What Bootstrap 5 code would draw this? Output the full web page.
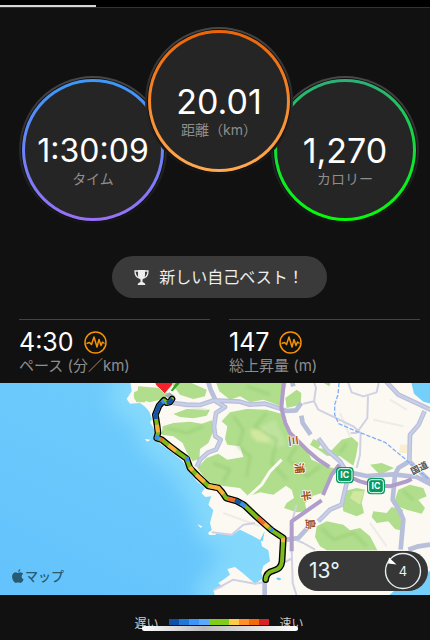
<!DOCTYPE html>
<html lang="ja">
<head>
<meta charset="utf-8">
<meta name="viewport" content="width=device-width, initial-scale=1">
<title>ランニングの記録</title>
<link href="https://cdn.jsdelivr.net/npm/bootstrap@5.3.0/dist/css/bootstrap.min.css" rel="stylesheet">
<style>
  body { background: #111; color: #fff; font-family: Inter, "Noto Sans CJK JP", sans-serif; }
  .top-strip { height: 8px; background: #000; border-bottom: 1px solid #333; }
  .top-strip .progress { height: 2px; width: 100%; background: transparent; border-radius: 0; }
  .top-strip .progress-bar { width: 22.3%; background: #d8d4da; }
  .dials { padding: 19px 11px 0 19px; }
  .dial { width: 148px; height: 148px; flex: none; padding: 1px; border-radius: 50%; border: 2px solid transparent;
    background: linear-gradient(#111, #111) padding-box, linear-gradient(#484848, #282828 50%, #141414) border-box; }
  .dial-side { margin-top: 49px; }
  .dial-main { margin: 0 -22px; z-index: 1; }
  .dial-face { height: 100%; border-radius: 50%; border: 3px solid transparent; padding-top: 51px; }
  .dial-time .dial-face { background: linear-gradient(#252525, #252525) padding-box, linear-gradient(#3c98f8, #9870f8) border-box; }
  .dial-main .dial-face { background: linear-gradient(#252525, #252525) padding-box, linear-gradient(#ec6408, #ffaa50) border-box; }
  .dial-cal .dial-face { background: linear-gradient(#252525, #252525) padding-box, linear-gradient(#2cb078, #0ce82c 60%, #08f808) border-box; }
  .dial-num { font-size: 34px; line-height: 36px; }
  .dial-time .dial-num { font-size: 32px; }
  .cap { font-size: 14px; line-height: 20px; color: #8e8e8e; }
  .stat .cap { font-size: 15px; }
  .best { height: 42px; width: 215px; border-radius: 21px; background: #3a3a3a; color: #eee; font-size: 16px; gap: 10px; }
  .best-row { padding: 32px 0 0 8px; }
  .stats { padding: 21px 10px 0 19px; gap: 19px; }
  .stat { border-top: 1px solid #444; padding-top: 8px; padding-bottom: 7px; }
  .stat-num { font-size: 25px; line-height: 28px; gap: 10px; }
  .map-brand { left: 12px; bottom: 9px; font-size: 13px; line-height: 20px; color: #285a74; gap: 1px; font-weight: 500; }
  .weather { right: 2px; bottom: 4px; width: 130px; height: 40px; border-radius: 20px; background: #363636; color: #e4f4f6; padding: 0 6px 0 11px; font-size: 21px; }
  .legend { padding: 18px 0 0 8px; font-size: 12px; line-height: 22px; gap: 10px; color: #ccc; height: 45px; }
  .scale { width: 101px; height: 6px; margin-top: 6px; }
  .scale span { flex: 1; }
  .home-bar { left: 50%; bottom: 9px; width: 156px; height: 5px; margin-left: -73px; border-radius: 3px; background: linear-gradient(90deg, #fff, #bbb 40%, #fff); }
</style>
</head>
<body>
<main>
  <div class="top-strip d-flex align-items-end">
    <div class="progress" role="progressbar" aria-label="ページ"><div class="progress-bar"></div></div>
  </div>

  <section class="dials d-flex justify-content-center text-center">
    <div class="dial dial-side dial-time"><div class="dial-face"><div class="dial-num">1:30:09</div><div class="cap">タイム</div></div></div>
    <div class="dial dial-main"><div class="dial-face"><div class="dial-num">20.01</div><div class="cap">距離（km）</div></div></div>
    <div class="dial dial-side dial-cal"><div class="dial-face"><div class="dial-num">1,270</div><div class="cap">カロリー</div></div></div>
  </section>

  <div class="best-row d-flex justify-content-center">
    <div class="best d-flex align-items-center justify-content-center">
      <svg width="15" height="17" viewBox="0 0 15 17" fill="none" stroke="#eee" aria-hidden="true">
        <path d="M4 1H11V6Q11 9.500 8.500 10.500V13Q11 13.500 11.500 16H3.500Q4 13.500 6.500 13V10.500Q4 9.500 4 6Z" fill="#eee" stroke="none"/>
        <path d="M4 2H1Q1 7.500 5 9M11 2H14Q14 7.500 10 9" stroke-width="1.300"/>
      </svg>
      <span>新しい自己ベスト！</span>
    </div>
  </div>

  <section class="stats d-flex">
    <div class="stat flex-fill w-50">
      <div class="stat-num d-flex align-items-center">4:30
        <svg width="23" height="23" viewBox="0 0 23 23" fill="none" stroke="#f59105" stroke-width="1.500" stroke-linejoin="round" aria-hidden="true"><circle cx="11.500" cy="11.500" r="10.500"/><path d="M2.500 12.500L5.500 11.500L7.500 13.500L10 6L13 16L15 8.500L17 14.500L18.500 11L20.500 12.500"/></svg>
      </div>
      <div class="cap">ペース (分／km)</div>
    </div>
    <div class="stat flex-fill w-50">
      <div class="stat-num d-flex align-items-center">147
        <svg width="23" height="23" viewBox="0 0 23 23" fill="none" stroke="#f59105" stroke-width="1.500" stroke-linejoin="round" aria-hidden="true"><circle cx="11.500" cy="11.500" r="10.500"/><path d="M2.500 12.500L5.500 11.500L7.500 13.500L10 6L13 16L15 8.500L17 14.500L18.500 11L20.500 12.500"/></svg>
      </div>
      <div class="cap">総上昇量 (m)</div>
    </div>
  </section>

  <section class="position-relative">
    <svg class="d-block w-100 h-auto" viewBox="0 0 1290 636" role="img" aria-label="ルートの地図">
      <defs>
        <linearGradient id="sea" x1="1" y1="0" x2="0" y2="1"><stop offset="0" stop-color="#74d0fa"/><stop offset=".6" stop-color="#6ac8fc"/><stop offset="1" stop-color="#64c2fc"/></linearGradient>
        <filter id="soft" x="-20%" y="-20%" width="140%" height="140%"><feGaussianBlur stdDeviation="28"/></filter>
        <filter id="haze" x="-20%" y="-20%" width="140%" height="140%"><feGaussianBlur stdDeviation="5"/></filter>
        <path id="land" d="M-30 0L-25 35L-40 58L-30 72L0 70L16 82L28 96L36 118L30 128L44 150L45 175L60 192L95 218L128 245L155 285L170 305L195 325L184 340L196 352L214 350L205 375L220 392L210 430L218 460L275 465L300 450L340 470L362 482L366 500L385 512L390 545L370 558L364 580L370 595L345 612L308 580L285 562L262 568L270 585L250 600L235 610L248 622L220 632L228 660H880V0Z"/>
      </defs>
      <rect width="1290" height="636" fill="url(#sea)"/>
      <g transform="translate(420 -10)">
        <use href="#land" fill="none" stroke="#8cdefc" stroke-width="95" opacity=".75" filter="url(#soft)"/>
        <ellipse cx="120" cy="540" rx="110" ry="65" fill="#68c6fa" opacity=".5" filter="url(#soft)"/>
        <use href="#land" fill="#fbf9f2"/>
        <g fill="#fbf9f2"><path d="M204 460L216 450L232 458L226 466H208ZM172 434L187 440L182 445ZM14 178L32 180L22 186Z"/></g>
        <g fill="#74d0fa"><path d="M812 0L822 42L850 66L880 74V0ZM738 655L762 634L800 630L840 585L880 570V655ZM408 596Q418 590 424 598Q416 606 408 596ZM360 482L374 455L368 485Z"/></g>

        <g fill="#b0de8c">
          <path d="M-18 38L0 30L16 38V68H-5Q-22 62-18 38Z"/>
          <path d="M-5 20L60 25L90 45L60 60L30 68L8 62L-12 68Z"/>
          <path d="M90 5L150 8L200 30L195 50L160 58L120 45ZM228 8H440L424 80L370 60L330 68L300 50L270 60L238 35Z"/>
          <path d="M100 103L140 88L210 90L200 108L160 116L120 112ZM68 140L100 130L150 126L185 132L216 122L222 150L205 190L180 208L178 238L158 245L140 218L128 190L100 170L65 165Z"/>
          <path d="M270 98L320 88L380 90L424 102L442 145L470 178L500 210L515 240L560 260L590 268L570 300L545 340L520 348L495 370L500 395L470 398L432 385L440 370L462 355L455 330L438 318L400 345L360 338L325 350L300 325L245 318L210 308L190 290L172 265L200 235L235 222L262 240L310 232L300 200L262 195L255 178L262 140L245 125Z"/>
          <path d="M470 30L484 40L482 75L440 85L436 55Z"/>
          <path d="M510 195L520 178L545 190L535 205L575 212L605 180L635 172L655 190L648 230L640 258L600 230L560 228L535 210Z"/>
          <path d="M690 255L725 250L762 265L720 285ZM610 335L650 325L675 330L665 370L672 400L650 410L610 395L605 360Z"/>
          <path d="M775 330L810 315L850 325L860 350L835 360L855 385L845 402L800 390L760 375ZM700 395L740 400L755 382L790 390L780 410L792 455L765 448L745 425L710 430L695 412Z"/>
          <path d="M530 440L560 425L610 435L630 452L660 445L690 470L712 512H560L540 500L525 472Z"/>
          <path d="M548 8H572L568 20Z"/>
        </g>
        <path d="M640 335L672 335L660 375L630 355Z" fill="#d2e8a0"/>
        <g filter="url(#haze)"><path d="M330 150L375 145L395 165L385 190L350 185L335 170Z" fill="#d2e8a0"/>
        <path d="M405 120L440 195L400 205L360 140Z" fill="#c6e6a8" opacity=".6"/></g>
        <path d="M780 195H803V220H778Z" fill="#fbedcf"/>
        <g fill="none" stroke="#8cc46c" stroke-width="6" opacity=".6" filter="url(#haze)">
          <path d="M280 110L310 150L295 200L330 230L320 290M380 100L345 140L410 180L395 250L440 300M80 145L140 160L190 140M220 250L270 270L250 305M470 200L445 240L500 290L540 260M620 190L600 220M545 445L580 480L640 460L680 500M790 335L820 360M320 20L390 45"/>
        </g>
        <g fill="none" stroke="#e9e5e4" stroke-width="6" opacity=".7">
          <path d="M600 100L630 170M700 120L790 140M750 60L800 90M690 430L740 500M250 400L360 440M130 80L200 90"/>
        </g>
        <path d="M326 350L365 315L390 275L425 240" stroke="#fbf9f2" stroke-width="9" fill="none"/>

        <g fill="none" stroke-linejoin="round">
          <g stroke="#d1d1e3" stroke-width="6">
            <path d="M520 0L528 25L522 65L535 90L640 140L662 160L660 225L650 265M522 65L490 72M625 10L635 38L670 50L710 38L716 10M684 50L682 115L650 160L632 160M470 375L455 430M215 458L275 465L310 435L345 430M220 632L280 600L345 612L376 607M455 475L490 490L525 510M455 510L458 610L470 648M458 535L430 550"/>
          </g>
          <g stroke="#b7bfdb" stroke-width="14">
            <path d="M98 70L140 75L180 76L222 62L300 66L330 75L375 72L418 86M205 8L212 30L226 60M222 62L255 82L228 100L222 140L226 170L242 180L228 210L205 218L180 240L170 262"/>
            <path d="M484 108L488 130L512 165M535 176L560 210L600 245L622 280M620 310L605 375L570 390L535 425M507 440L475 475L440 480M418 86L440 94L468 92L484 70"/>
            <path d="M620 276L680 289L760 284L830 292L875 315M738 5L775 45L880 94M854 94L836 135L810 165L808 245L775 265L765 285L758 360L780 395L790 420L782 510M808 245L880 315M805 510L835 500L870 495M374 605V650M455 0L460 20"/>
          </g>
          <g stroke="#c9cfe6" stroke-width="7"><path d="M98 70L140 75L180 76L222 62L300 66L330 75L375 72L418 86M222 62L255 82L228 100L222 140L226 170L242 180L228 210L205 218L180 240L170 262M535 176L560 210L600 245L622 280M620 310L605 375L570 390L535 425M738 5L775 45L880 94M854 94L836 135L810 165L808 245"/></g>
          <g stroke="#b09dca"><path stroke-width="12" d="M432 0L424 85L436 130L450 160L500 210L535 240L568 262M598 255L575 285L549 346M545 362L455 425V515M615 286L660 305L700 316L750 320L800 305L815 298"/></g>
          <path d="M597 10L594 45L584 75V105L596 132L650 155L735 188L780 225L868 300" stroke="#82b0fa" stroke-width="4" stroke-dasharray="13 5"/>
        </g>

        <g font-family="Noto Sans CJK JP, sans-serif" font-size="33" font-weight="700" fill="#9a5028" text-anchor="middle" stroke="#fff" stroke-width="4" paint-order="stroke">
          <text transform="translate(448 185) rotate(83)">三</text>
          <text transform="translate(466 267) rotate(83)">浦</text>
          <text transform="translate(486 350) rotate(83)">半</text>
          <text transform="translate(499 434) rotate(86)">島</text>
        </g>
        <text transform="translate(818 286) rotate(-27)" font-family="Noto Sans CJK JP, sans-serif" font-size="27" font-weight="700" fill="#545454" stroke="#fff" stroke-width="4" paint-order="stroke">国道</text>

        <g font-family="Inter, sans-serif" font-size="26" font-weight="700" text-anchor="middle">
          <rect x="588" y="262" width="53" height="49" rx="12" fill="#079a60"/><rect x="593" y="267" width="43" height="39" rx="8" fill="none" stroke="#fff" stroke-width="3"/><text x="614" y="296" fill="#fff">IC</text>
          <rect x="681" y="295" width="54" height="49" rx="12" fill="#079a60"/><rect x="686" y="300" width="44" height="39" rx="8" fill="none" stroke="#fff" stroke-width="3"/><text x="708" y="329" fill="#fff">IC</text>
        </g>

        <path d="M92 33L108 10H120L98 35Z" fill="#32a51c"/>
        <path d="M75 48L88 38L105 50L94 62Z" fill="#a9a9b4"/>
        <path d="M43 0Q44 18 58 26L74 42L88 26Q100 18 101 0Z" fill="#f3222a" stroke="#fff" stroke-width="2"/>
        <g fill="none" stroke-linecap="round" stroke-linejoin="round">
          <path d="M96 58L90 67L80 69L72 62L57 78L46 105L51 135L54 160L50 175L65 180L90 200L115 219L140 237L150 265L175 291L205 319L235 325L246 337L258 355L290 364L312 376L350 412L395 452L430 475L426 545Q424 568 400 573Q378 578 377 600" stroke="#000" stroke-width="20"/>
          <path d="M96 58L90 67L80 69L72 62L57 78L46 105L51 135L54 160L50 175L65 180L90 200L115 219L140 237L150 265L175 291L205 319L235 325L246 337L258 355L290 364L312 376L350 412L395 452L430 475L426 545Q424 568 400 573Q378 578 377 600" stroke="#7dbb1c" stroke-width="12"/>
          <g stroke-width="12" stroke-linecap="butt">
            <path d="M97 58L90 67L80 70M68 67L57 78L48 100L47 118M284 362L312 376" stroke="#1652a8"/>
            <path d="M53 166L50 175L57 178M140 232L143 245M392 449L399 454M72 64L66 69M302 370L316 380" stroke="#3d90e4"/>
            <path d="M51 135L54 158M85 196L108 214M150 262L158 273M168 284L193 307M205 319L235 325L250 343M365 425L385 443M429 475V488" stroke="#f5b33e"/>
            <path d="M61 179L68 182M264 357L284 362M353 414L373 432" stroke="#f0682a"/>
          </g>
        </g>
      </g>
    </svg>
    <div class="map-brand position-absolute d-flex align-items-center">
      <svg width="12" height="14" viewBox="0 0 12 14" fill="currentColor" aria-hidden="true"><path d="M8.300 0Q8.400 2.500 6 3.100Q5.900 .8 8.300 0ZM6 4Q7 3.300 8.400 3.300Q10.200 3.400 11.200 4.800Q9.500 5.900 9.600 7.700Q9.700 9.600 11.600 10.400Q10.200 13.900 8.500 14Q7.800 14 7.100 13.600Q6.200 13.200 5.200 13.600Q4.300 14 3.800 14Q2.400 13.900 1 11.200Q-.3 8.500.3 6.100Q1.100 3.500 3.600 3.300Q4.600 3.300 6 4Z"/></svg>
      <span>マップ</span>
    </div>
    <div class="weather position-absolute d-flex align-items-center justify-content-between">
      <span>13°</span>
      <svg width="38" height="38" viewBox="0 0 38 38" role="img" aria-label="風 4">
        <circle cx="19" cy="19" r="17.500" fill="none" stroke="#e4eeee" stroke-width="1.400"/>
        <path d="M5 5.500L12.500 12.500L4 11.500Z" fill="#fff"/>
        <text x="19" y="24" font-size="13" text-anchor="middle" fill="#e4f4f6">4</text>
      </svg>
    </div>
  </section>

  <footer class="legend position-relative d-flex justify-content-center">
    <span>遅い</span>
    <div class="scale d-flex">
      <span style="background:#0c50a8"></span><span style="background:#1f78d8"></span><span style="background:#3c96f8"></span><span style="background:#58aafc"></span><span style="background:#80cc18"></span><span style="background:#80cc18"></span><span style="background:#ffca4c"></span><span style="background:#ff8f28"></span><span style="background:#f2680a"></span><span style="background:#d82028"></span>
    </div>
    <span>速い</span>
    <div class="home-bar position-absolute"></div>
  </footer>
</main>
<script src="https://cdn.jsdelivr.net/npm/bootstrap@5.3.0/dist/js/bootstrap.bundle.min.js"></script>
</body>
</html>
